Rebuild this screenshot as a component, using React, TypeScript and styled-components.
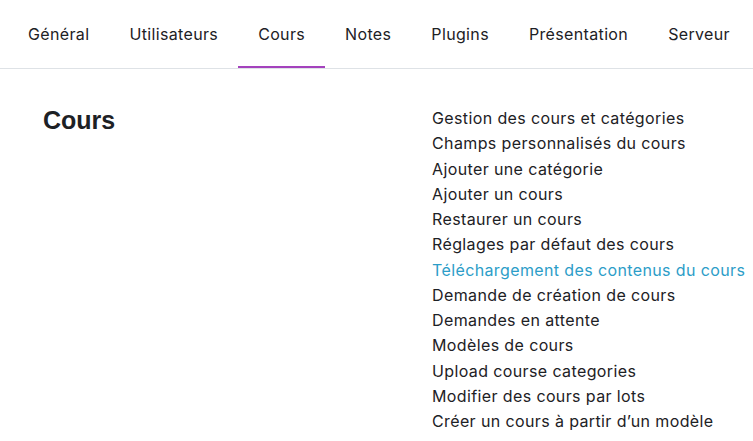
import React from 'react';
import styled, { createGlobalStyle } from 'styled-components';

const GlobalStyle = createGlobalStyle`
  body {
    margin: 0;
    background: #fff;
    font-family: Inter, "Noto Sans", sans-serif;
    color: #1d2125;
  }
`;

const Page = styled.div`
  width: 753px;
`;

const Nav = styled.nav`
  display: flex;
  padding-left: 8px;
  border-bottom: 1px solid #dee2e6;
  height: 68px;
  overflow: hidden;
`;

const Tab = styled.a<{ $active?: boolean }>`
  display: flex;
  align-items: center;
  padding: 1px 20px 0;
  margin-bottom: -1px;
  font-size: 16px;
  letter-spacing: 0.35px;
  color: #1d2125;
  text-decoration: none;
  white-space: nowrap;
  border-bottom: 3px solid ${p => (p.$active ? '#a442bd' : 'transparent')};
`;

const Content = styled.section`
  display: grid;
  grid-template-columns: 389px 1fr;
  padding: 37px 0 0 43px;
`;

const Heading = styled.h2`
  margin: -1px 0 0;
  font-family: "Liberation Sans", Arial, sans-serif;
  font-weight: 700;
  font-size: 25px;
  line-height: 30px;
  color: #1d2125;
`;

const LinkList = styled.ul`
  list-style: none;
  margin: 0;
  padding: 0;
`;

const Item = styled.li<{ $highlight?: boolean }>`
  font-size: 16px;
  line-height: 25.25px;
  letter-spacing: 0.38px;
  white-space: nowrap;
  color: ${p => (p.$highlight ? '#2c9dc8' : '#1d2125')};
`;

const tabs = ['Général', 'Utilisateurs', 'Cours', 'Notes', 'Plugins', 'Présentation', 'Serveur'];

const links = [
  'Gestion des cours et catégories',
  'Champs personnalisés du cours',
  'Ajouter une catégorie',
  'Ajouter un cours',
  'Restaurer un cours',
  'Réglages par défaut des cours',
  'Téléchargement des contenus du cours',
  'Demande de création de cours',
  'Demandes en attente',
  'Modèles de cours',
  'Upload course categories',
  'Modifier des cours par lots',
  'Créer un cours à partir d’un modèle',
];

export default function App() {
  return (
    <Page>
      <GlobalStyle />
      <Nav>
        {tabs.map(t => (
          <Tab key={t} $active={t === 'Cours'}>{t}</Tab>
        ))}
      </Nav>
      <Content>
        <Heading>Cours</Heading>
        <LinkList>
          {links.map(l => (
            <Item key={l} $highlight={l.startsWith('Téléchargement')}>{l}</Item>
          ))}
        </LinkList>
      </Content>
    </Page>
  );
}
